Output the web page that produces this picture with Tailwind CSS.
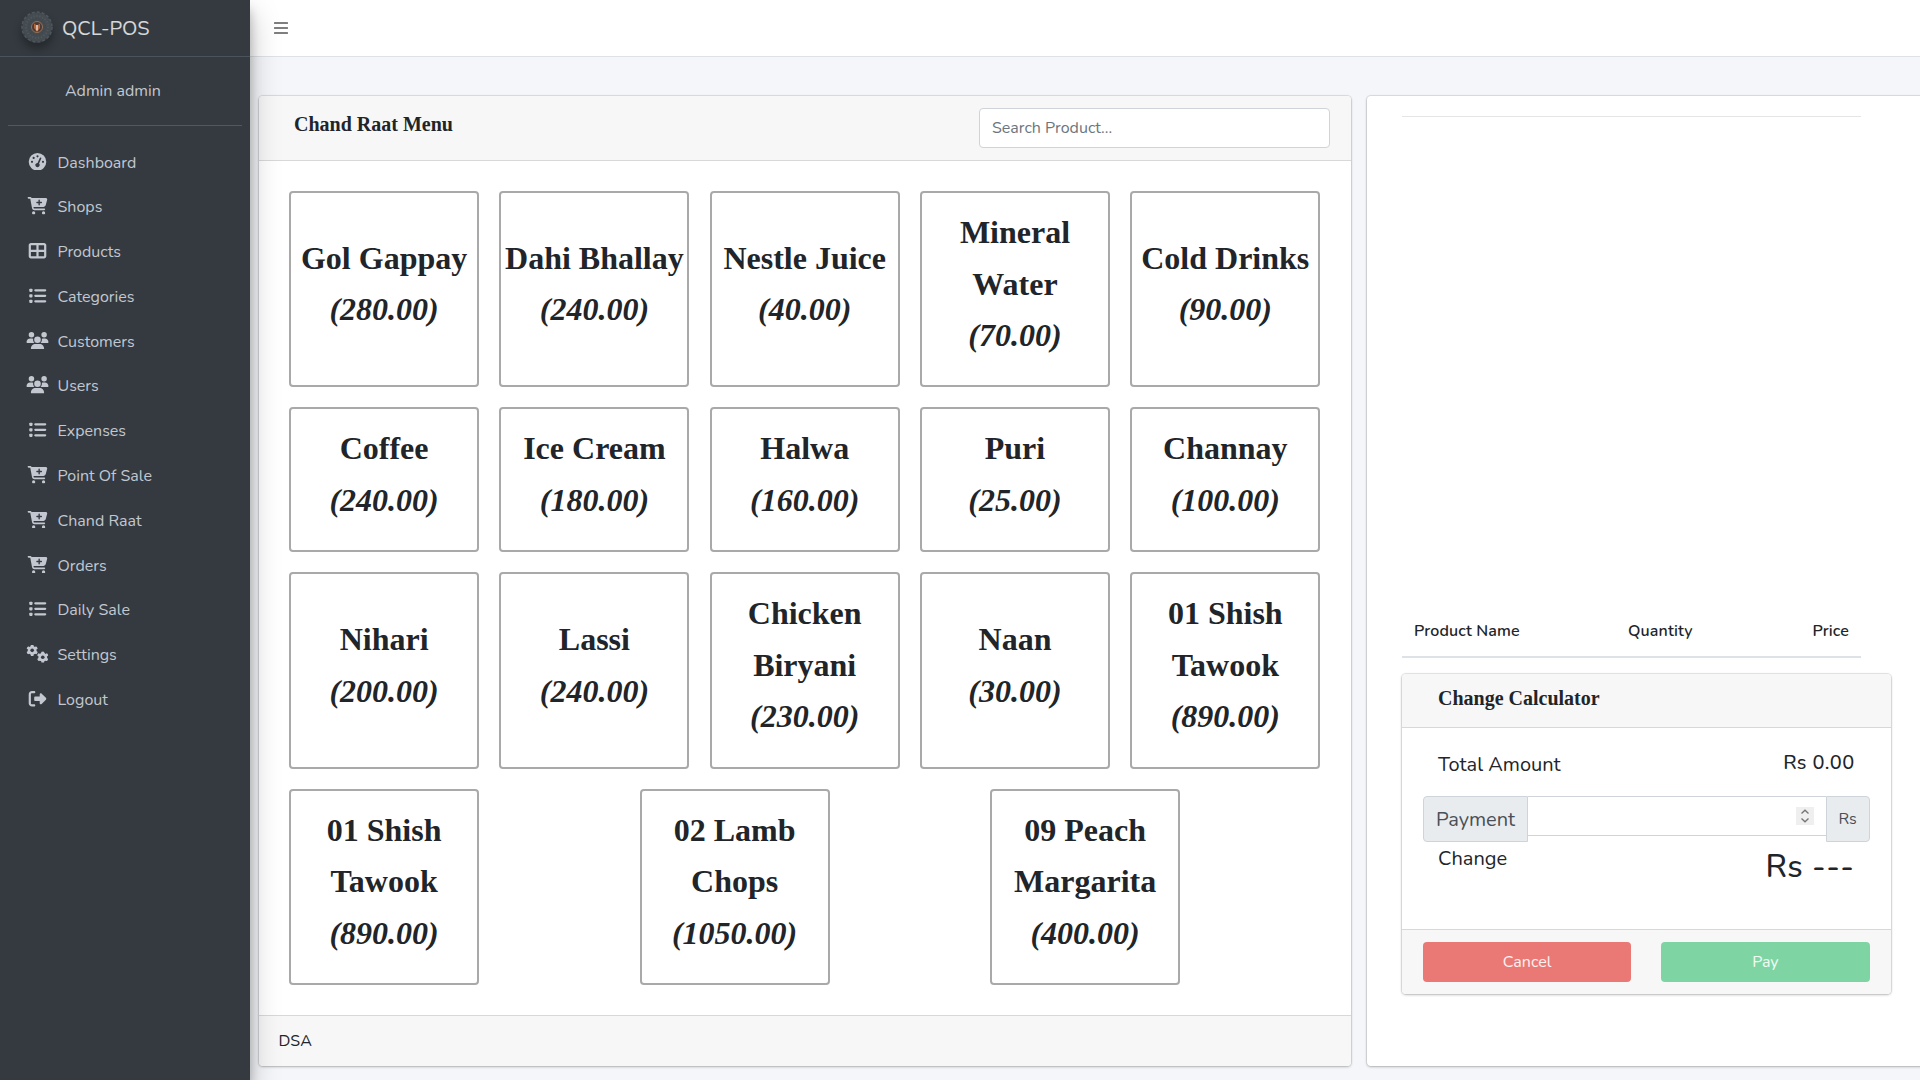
<!DOCTYPE html>
<html lang="en">
<head>
<meta charset="utf-8">
<title>QCL-POS</title>
<script src="https://cdn.jsdelivr.net/npm/@tailwindcss/browser@4"></script>
</head>
<body class="h-[1080px] overflow-hidden bg-[#f4f6f9] font-['Nunito','Lato',sans-serif] text-base leading-[25.6px] text-[#212529]">
<svg class="hidden">
  <symbol id="gauge" viewBox="0 0 512 512"><path fill-rule="evenodd" d="M256 0a256 256 0 1 1 0 512A256 256 0 1 1 256 0zM288 96a32 32 0 1 0-64 0 32 32 0 1 0 64 0zM256 416c35.300 0 64-28.700 64-64 0-17.400-6.900-33.100-18.100-44.600L366 161.700c5.300-12.100-.2-26.300-12.300-31.600s-26.300.2-31.600 12.300L257.900 288H256c-35.300 0-64 28.700-64 64s28.700 64 64 64zM176 144a32 32 0 1 0-64 0 32 32 0 1 0 64 0zM96 288a32 32 0 1 0 0-64 32 32 0 1 0 0 64zM448 256a32 32 0 1 0-64 0 32 32 0 1 0 64 0z"/></symbol>
  <symbol id="cart" viewBox="0 0 576 512"><path fill-rule="evenodd" d="M0 24C0 10.700 10.700 0 24 0H69.500c22 0 41.500 12.800 50.600 32h411c26.300 0 45.500 25 38.600 50.400l-41 152.300c-8.500 31.400-37 53.300-69.500 53.300H170.700l5.400 28.500c2.200 11.300 12.100 19.500 23.600 19.500H488c13.300 0 24 10.700 24 24s-10.700 24-24 24H199.700c-34.600 0-64.300-24.600-70.700-58.500L77.400 54.500c-.7-3.800-4-6.500-7.900-6.500H24C10.700 48 0 37.300 0 24zM128 464a48 48 0 1 1 96 0 48 48 0 1 1-96 0zm336-48a48 48 0 1 1 0 96 48 48 0 1 1 0-96zM252 160c0 11 9 20 20 20h44v44c0 11 9 20 20 20s20-9 20-20V180h44c11 0 20-9 20-20s-9-20-20-20H356V96c0-11-9-20-20-20s-20 9-20 20v44H272c-11 0-20 9-20 20z"/></symbol>
  <symbol id="table" viewBox="0 0 512 512"><path fill-rule="evenodd" d="M448 96V224H288V96H448zm0 192V416H288V288H448zM224 224H64V96H224V224zM64 288H224V416H64V288zM64 32C28.700 32 0 60.700 0 96V416c0 35.300 28.700 64 64 64H448c35.300 0 64-28.700 64-64V96c0-35.300-28.700-64-64-64H64z"/></symbol>
  <symbol id="list" viewBox="0 0 512 512"><rect x="16" y="48" width="96" height="96" rx="24"/><rect x="16" y="208" width="96" height="96" rx="24"/><rect x="16" y="368" width="96" height="96" rx="24"/><rect x="160" y="64" width="352" height="64" rx="32"/><rect x="160" y="224" width="352" height="64" rx="32"/><rect x="160" y="384" width="352" height="64" rx="32"/></symbol>
  <symbol id="users" viewBox="0 0 640 512"><path d="M144 0a80 80 0 1 1 0 160A80 80 0 1 1 144 0zM512 0a80 80 0 1 1 0 160A80 80 0 1 1 512 0zM0 298.700C0 239.800 47.800 192 106.700 192h42.700c15.900 0 31 3.500 44.600 9.700c-1.300 7.200-1.900 14.700-1.900 22.300c0 38.200 16.800 72.500 43.300 96H21.300C9.600 320 0 310.400 0 298.700zM405.300 320h-.7c26.600-23.500 43.300-57.800 43.300-96c0-7.600-.7-15-1.900-22.300c13.600-6.300 28.700-9.700 44.600-9.700h42.700C592.200 192 640 239.800 640 298.700c0 11.800-9.600 21.300-21.300 21.300H405.300zM224 224a96 96 0 1 1 192 0 96 96 0 1 1-192 0zM128 485.300C128 411.700 187.700 352 261.300 352H378.700C452.300 352 512 411.700 512 485.300c0 14.700-11.900 26.700-26.700 26.700H154.700c-14.700 0-26.700-11.900-26.700-26.700z"/></symbol>
  <symbol id="gear" viewBox="-10 -10 20 20"><g><rect x="-2.400" y="-9.600" width="4.800" height="19.200" rx="1.400"/><rect x="-2.400" y="-9.600" width="4.800" height="19.200" rx="1.400" transform="rotate(60)"/><rect x="-2.400" y="-9.600" width="4.800" height="19.200" rx="1.400" transform="rotate(120)"/><circle r="7.200"/><circle r="3" fill="#343a40"/></g></symbol>
  <symbol id="gears" viewBox="0 0 640 512"><use href="#gear" x="-10" y="-20" width="350" height="350"/><use href="#gear" x="298" y="180" width="350" height="350"/></symbol>
  <symbol id="logout" viewBox="0 0 512 512"><path d="M377.900 105.900L500.700 228.700c7.200 7.200 11.300 17.100 11.300 27.300s-4.100 20.100-11.300 27.300L377.900 406.100c-6.400 6.400-15 9.900-24 9.900c-18.700 0-33.900-15.200-33.900-33.900v-62.100h-128c-17.700 0-32-14.300-32-32v-64c0-17.700 14.300-32 32-32h128v-62.100c0-18.700 15.200-33.900 33.900-33.900c9 0 17.600 3.600 24 9.900zM160 96H96c-17.700 0-32 14.300-32 32v256c0 17.700 14.300 32 32 32h64c17.700 0 32 14.300 32 32s-14.300 32-32 32H96c-53 0-96-43-96-96V128C0 75 43 32 96 32h64c17.700 0 32 14.300 32 32s-14.300 32-32 32z"/></symbol>
</svg>

<div class="flex h-full">
  <!-- Sidebar -->
  <aside class="relative z-10 flex w-[250px] shrink-0 flex-col bg-[#343a40] text-[#c2c7d0] shadow-[0_14px_28px_rgba(0,0,0,.25),0_10px_10px_rgba(0,0,0,.22)]">
    <a class="flex h-[57px] shrink-0 items-center border-b border-[#4b545c] pl-[21px] text-xl text-white/80">
      <svg class="-mt-[3px] size-8 rounded-full shadow-[0_6px_8px_rgba(0,0,0,.3)]" viewBox="0 0 32 32">
        <circle cx="16" cy="16" r="14.500" fill="#454c51"/>
        <g fill="none">
          <circle cx="16" cy="16" r="15" stroke="#50575c" stroke-width="1.500" stroke-dasharray="3 2"/>
          <circle cx="16" cy="16" r="11" stroke-width="2" stroke-dasharray="1 2" stroke="#525a5f"/>
          <circle cx="16" cy="16" r="8" stroke-width="2" stroke-dasharray="1.500 1.500" stroke="#41484d"/>
        </g>
        <circle cx="16" cy="16" r="5.500" fill="#4a3a35" stroke="#94705a" stroke-width="1"/>
        <path d="M13 12.500v4.500l3 4 3-4v-4.500l-3 2z" fill="#b0643e"/>
        <path d="M16 14v5.500" stroke="#ead9c4" stroke-width="1.500"/>
      </svg>
      <span class="mt-px ml-[9px]">QCL-POS</span>
    </a>
    <div class="mx-2 flex h-[69px] shrink-0 border-b border-[#4f5962] pt-[21.500px] pl-[57px]">Admin admin</div>
    <nav id="nav" class="flex flex-col gap-[3.200px] px-2 pt-[16.500px]"></nav>
  </aside>

  <!-- Page -->
  <div class="flex min-w-0 flex-1 flex-col">
    <header class="flex h-[57px] shrink-0 items-center border-b border-[#dee2e6] bg-white pl-6">
      <svg class="h-3 w-[14px] fill-black/50" viewBox="0 0 14 12"><rect width="14" height="2" rx=".5"/><rect y="5" width="14" height="2" rx=".5"/><rect y="10" width="14" height="2" rx=".5"/></svg>
    </header>
    <main class="flex gap-4 pt-[39px] pl-[8.500px]">
      <section class="flex h-[970px] w-[1092px] shrink-0 flex-col rounded bg-white shadow-[0_0_1px_1px_rgba(0,0,0,.1),0_1px_3px_rgba(0,0,0,.2)]">
        <div class="flex h-[65px] justify-between rounded-t border-b border-black/[.125] bg-[#f7f7f7] pt-3 pr-[20.500px] pl-[35.500px]">
          <h3 class="font-['Liberation_Serif',serif] text-xl leading-8 font-bold">Chand Raat Menu</h3>
          <input class="h-10 w-[351px] rounded border border-[#ced4da] bg-white px-3 placeholder:text-[#6c757d]" placeholder="Search Product...">
        </div>
        <div id="menu" class="flex flex-1 flex-col gap-5 py-[30px] pr-[30px] pl-[30.500px] font-['Liberation_Serif',serif] text-[32px] leading-[51.600px] font-bold"></div>
        <div class="h-[51px] rounded-b border-t border-black/[.125] bg-[#f7f7f7] px-5 py-[13px]">DSA</div>
      </section>

      <section class="flex h-[970px] w-[640px] shrink-0 flex-col rounded bg-white pl-[35.500px] shadow-[0_0_1px_1px_rgba(0,0,0,.1),0_1px_3px_rgba(0,0,0,.2)]">
        <div class="mt-5 h-px w-[459px] shrink-0 bg-black/10"></div>
        <div class="mt-[488px] flex h-[53px] w-[459px] shrink-0 items-start justify-between border-b-2 border-[#dee2e6] px-3 pt-[13.500px] font-semibold tracking-[0.150px]">
          <span class="w-[214px]">Product Name</span><span class="flex-1">Quantity</span><span>Price</span>
        </div>
        <div class="mt-4 flex h-80 w-[488.500px] shrink-0 flex-col rounded bg-white shadow-[0_0_1px_1px_rgba(0,0,0,.1),0_1px_3px_rgba(0,0,0,.2)]">
          <div class="h-[54px] rounded-t border-b border-black/[.125] bg-[#f7f7f7] pt-2 pl-9 font-['Liberation_Serif',serif] text-xl leading-8 font-bold">Change Calculator</div>
          <div class="flex-1 px-[21px] text-xl leading-8">
            <div class="flex h-[68px] justify-between px-[15px]">
              <span class="pt-[21px]">Total Amount</span><span class="pt-[19px] font-medium tracking-[0.350px]">Rs 0.00</span>
            </div>
            <div class="flex h-[46px] items-stretch">
              <span class="flex w-[105px] items-center rounded-l border border-[#ced4da] bg-[#e9ecef] pt-px pl-3 text-[#495057]">Payment</span>
              <span class="flex h-10 flex-1 items-center justify-end border-y border-[#ced4da] bg-white pr-3">
                <svg class="h-[18px] w-[18px] bg-[#efefef]" viewBox="0 0 18 18" fill="none" stroke="#757575" stroke-width="1.300"><path d="M5.500 6.500 9 3.200l3.500 3.300M5.500 11.500 9 14.800l3.500-3.300"/></svg>
              </span>
              <span class="flex w-11 items-center justify-center rounded-r border border-[#ced4da] bg-[#e9ecef] text-base text-[#495057]">Rs</span>
            </div>
            <div class="flex justify-between px-[15px]">
              <span class="pt-px">Change</span><span class="pt-[7px] text-[32px] leading-9 font-medium tracking-[0.500px]">Rs ---</span>
            </div>
          </div>
          <div class="flex h-[65px] gap-[30px] rounded-b border-t border-black/[.125] bg-[#f7f7f7] px-[21px] pt-3 text-white/90">
            <button class="h-10 flex-1 rounded bg-[#ea7874] pt-px">Cancel</button>
            <button class="h-10 flex-1 rounded bg-[#7ed5a3] pt-px">Pay</button>
          </div>
        </div>
      </section>
    </main>
  </div>
</div>

<script>
const links = [
  ["gauge", "Dashboard"], ["cart", "Shops"], ["table", "Products"], ["list", "Categories"],
  ["users", "Customers"], ["users", "Users"], ["list", "Expenses"], ["cart", "Point Of Sale"],
  ["cart", "Chand Raat"], ["cart", "Orders"], ["list", "Daily Sale"], ["gears", "Settings"], ["logout", "Logout"]
];
document.getElementById("nav").innerHTML = links.map(([icon, label]) =>
  `<a class="flex h-[41.600px] items-center gap-[6.500px] pl-4"><svg class="-mt-1 h-[17.600px] w-[27px] fill-current"><use href="#${icon}"/></svg><span>${label}</span></a>`
).join("");

const rows = [
  [["Gol Gappay", "280.00"], ["Dahi Bhallay", "240.00"], ["Nestle Juice", "40.00"], ["Mineral Water", "70.00"], ["Cold Drinks", "90.00"]],
  [["Coffee", "240.00"], ["Ice Cream", "180.00"], ["Halwa", "160.00"], ["Puri", "25.00"], ["Channay", "100.00"]],
  [["Nihari", "200.00"], ["Lassi", "240.00"], ["Chicken Biryani", "230.00"], ["Naan", "30.00"], ["01 Shish Tawook", "890.00"]],
  [["01 Shish Tawook", "890.00"], ["02 Lamb Chops", "1050.00"], ["09 Peach Margarita", "400.00"]]
];
document.getElementById("menu").innerHTML = rows.map(row =>
  `<div class="${row.length === 3 ? "-mr-5 grid grid-cols-3" : "grid grid-cols-5 gap-5"}">` + row.map(([name, price]) =>
    `<div class="flex w-[190.200px] flex-col justify-center rounded border-2 border-[#a9a9a9] pt-[14px] pb-[23.600px] text-center"><div>${name}</div><i>(${price})</i></div>`
  ).join("") + `</div>`
).join("");
</script>
</body>
</html>
